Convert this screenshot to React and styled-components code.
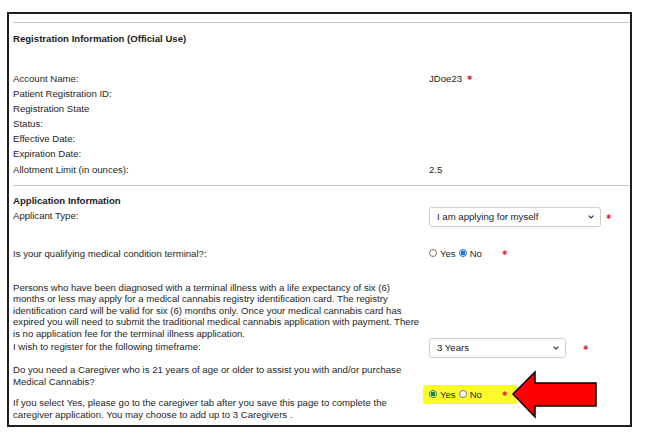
import React from "react";
import styled, { createGlobalStyle } from "styled-components";

const Global = createGlobalStyle`
  html, body {
    margin: 0;
    background: #fff;
  }
  body {
    font-family: "Liberation Sans", Arial, sans-serif;
    font-size: 9.6px;
    color: #262626;
  }
`;

const Frame = styled.div`
  position: relative;
  box-sizing: border-box;
  width: 625px;
  height: 415px;
  margin: 12px 0 0 7px;
  padding-left: 4px;
  border: 2px solid #1e1e1e;
`;

const Divider = styled.div`
  height: 1px;
  background: #c6c6c6;
  margin-top: ${(p) => p.$top}px;
`;

const Title = styled.div`
  font-weight: bold;
  line-height: 15px;
  margin-top: ${(p) => p.$top}px;
  color: #1c1c1c;
`;

const Row = styled.div`
  display: grid;
  grid-template-columns: 416px 1fr;
  align-items: start;
  height: ${(p) => p.$h}px;
  margin-top: ${(p) => p.$top || 0}px;
`;

const Label = styled.div`
  line-height: ${(p) => p.$lh || 15}px;
`;

const Value = styled.div`
  line-height: 15px;
  display: flex;
  align-items: center;
  gap: 5px;
`;

const Cell = styled.div`
  position: relative;
  display: flex;
  align-items: center;
  gap: ${(p) => p.$gap || 0}px;
  margin-top: ${(p) => p.$top || 0}px;
`;

const Paragraph = styled.div`
  line-height: ${(p) => p.$lh}px;
  margin-top: ${(p) => p.$top || 0}px;
`;

const SelectBox = styled.div`
  box-sizing: border-box;
  width: ${(p) => p.$w}px;
  height: 20px;
  padding: 0 6px 0 7px;
  display: flex;
  align-items: center;
  justify-content: space-between;
  border: 1px solid #cfcfcf;
  border-radius: 3px;
  background: #fff;
  color: #222;
`;

const Star = styled.span`
  font-family: "DejaVu Sans", sans-serif;
  font-size: 6.5px;
  line-height: 1;
  color: #e3262b;
  margin-left: ${(p) => p.$ml || 0}px;
`;

const RadioGroup = styled.div`
  display: flex;
  align-items: center;
  height: ${(p) => (p.$marked ? 19 : 15)}px;
  margin-left: ${(p) => (p.$marked ? -6 : 0)}px;
  padding: ${(p) => (p.$marked ? "0 10px 0 6px" : "0")};
  background: ${(p) => (p.$marked ? "#fbfb2a" : "transparent")};
  border-radius: 2px;
`;

const Dot = styled.span`
  box-sizing: border-box;
  width: 8px;
  height: 8px;
  border-radius: 50%;
  border: 1px solid ${(p) => (p.$on ? p.$color : "#777")};
  background: ${(p) =>
    p.$on ? `radial-gradient(circle, ${p.$color} 0 2.2px, #fff 2.6px)` : "#fff"};
  margin-right: 3px;
`;

const RadioText = styled.span`
  margin-right: 3px;
  line-height: 15px;
`;

const Arrow = styled.svg`
  position: absolute;
  left: 81px;
  top: 6px;
`;

const Chevron = () => (
  <svg width="6" height="4" viewBox="0 0 6 4">
    <path d="M0.6 0.6 L3 3 L5.4 0.6" fill="none" stroke="#333" strokeWidth="1.2" />
  </svg>
);

const Select = ({ w, children }) => (
  <SelectBox $w={w}>
    <span>{children}</span>
    <Chevron />
  </SelectBox>
);

const Radios = ({ checked, color, marked, starGap }) => (
  <RadioGroup $marked={marked}>
    <Dot $on={checked === "yes"} $color={color} />
    <RadioText>Yes</RadioText>
    <Dot $on={checked === "no"} $color={color} />
    <RadioText>No</RadioText>
    <Star $ml={starGap}>✱</Star>
  </RadioGroup>
);

const regRows = [
  ["Account Name:", "JDoe23", true],
  ["Patient Registration ID:", ""],
  ["Registration State", ""],
  ["Status:", ""],
  ["Effective Date:", ""],
  ["Expiration Date:", ""],
  ["Allotment Limit (in ounces):", "2.5"],
];

export default function App() {
  return (
    <>
      <Global />
      <Frame>
        <Divider $top={8} />
        <Title $top={8}>Registration Information (Official Use)</Title>
        <div style={{ height: 24.5 }} />
        {regRows.map(([label, value, req]) => (
          <Row key={label} $h={15.2}>
            <Label>{label}</Label>
            <Value>
              {value}
              {req && <Star>✱</Star>}
            </Value>
          </Row>
        ))}
        <Divider $top={8} />
        <Title $top={7}>Application Information</Title>
        <Row $h={38}>
          <Label>Applicant Type:</Label>
          <Cell $gap={5} $top={-1}>
            <Select w={172}>I am applying for myself</Select>
            <Star>✱</Star>
          </Cell>
        </Row>
        <Row $h={36}>
          <Label>Is your qualifying medical condition terminal?:</Label>
          <Cell>
            <Radios checked="no" color="#1a73e8" starGap={17} />
          </Cell>
        </Row>
        <Paragraph $lh={11.5}>
          Persons who have been diagnosed with a terminal illness with a life expectancy of six (6)
          <br />
          months or less may apply for a medical cannabis registry identification card. The registry
          <br />
          identification card will be valid for six (6) months only. Once your medical cannabis card has
          <br />
          expired you will need to submit the traditional medical cannabis application with payment. There
          <br />
          is no application fee for the terminal illness application.
        </Paragraph>
        <Row $h={24.5}>
          <Label>I wish to register for the following timeframe:</Label>
          <Cell $gap={17} $top={-1.5}>
            <Select w={137}>3 Years</Select>
            <Star>✱</Star>
          </Cell>
        </Row>
        <Row $h={58}>
          <div>
            <Paragraph $lh={12}>
              Do you need a Caregiver who is 21 years of age or older to assist you with and/or purchase
              <br />
              Medical Cannabis?
            </Paragraph>
            <Paragraph $lh={12} $top={9}>
              If you select Yes, please go to the caregiver tab after you save this page to complete the
              <br />
              caregiver application. You may choose to add up to 3 Caregivers .
            </Paragraph>
          </div>
          <Cell $top={21}>
            <Radios checked="yes" color="#1f8a2e" marked starGap={17} />
            <Arrow width="90" height="50" viewBox="0 0 90 50" style={{ top: -15 }}>
              <polygon
                points="3,24 25,2 25,13 86,13 86,36 25,36 25,47"
                fill="#ff0000"
                stroke="#000"
                strokeWidth="1.5"
                strokeLinejoin="miter"
              />
            </Arrow>
          </Cell>
        </Row>
      </Frame>
    </>
  );
}
